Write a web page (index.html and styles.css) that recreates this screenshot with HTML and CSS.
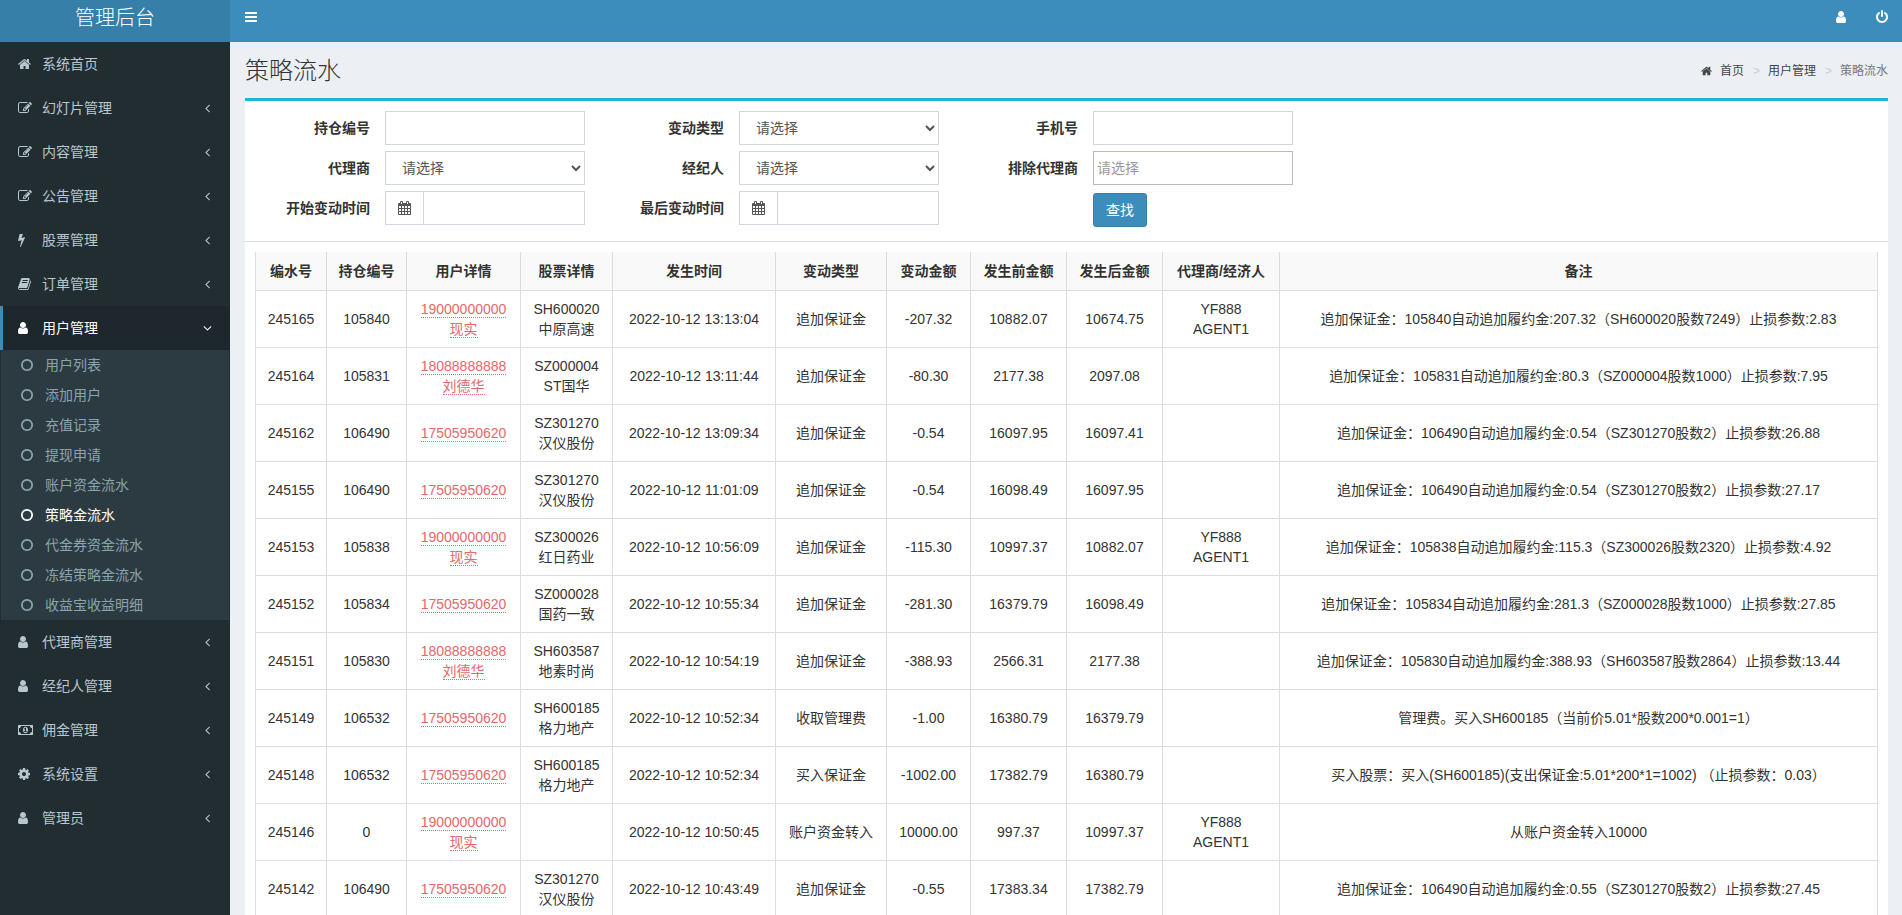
FILE: index.html
```html
<!DOCTYPE html>
<html lang="zh-CN">

<head>
    <meta charset="UTF-8">
    <meta name="viewport" content="width=device-width, initial-scale=1">
    <title>策略流水 - 管理后台</title>
    <link rel="stylesheet" href="styles.css">
</head>

<body>
    <!-- icon sprite -->
    <svg class="sprite" aria-hidden="true">
        <symbol id="i-home" viewBox="64 0 1664 1792"><path d="M1472 992v480q0 26-19 45t-45 19h-384v-384h-256v384h-384q-26 0-45-19t-19-45v-480q0-1 .5-3t.5-3l575-474 575 474q1 2 1 6zm223-69l-62 74q-8 9-21 11h-3q-13 0-21-7l-692-577-692 577q-12 8-24 7-13-2-21-11l-62-74q-8-10-7-23.5t11-21.5l719-599q32-26 76-26t76 26l244 204v-195q0-14 9-23t23-9h192q14 0 23 9t9 23v408l219 182q10 8 11 21.5t-7 23.5z"/></symbol>
        <symbol id="i-edit" viewBox="0 0 1792 1792"><path d="M888 1184l116-116-152-152-116 116v56h96v96h56zm440-720q-16-16-33 1l-350 350q-17 17-1 33t33-1l350-350q17-17 1-33zm80 594v190q0 119-84.5 203.5t-203.5 84.5h-832q-119 0-203.5-84.5t-84.5-203.5v-832q0-119 84.5-203.5t203.5-84.5h832q63 0 117 25 15 7 18 23 3 17-9 29l-49 49q-14 14-32 8-23-6-45-6h-832q-66 0-113 47t-47 113v832q0 66 47 113t113 47h832q66 0 113-47t47-113v-126q0-13 9-22l64-64q15-15 35-7t20 29zm-96-738l288 288-672 672h-288v-288zm444 132l-92 92-288-288 92-92q28-28 68-28t68 28l152 152q28 28 28 68t-28 68z"/></symbol>
        <symbol id="i-bolt" viewBox="448 0 896 1792"><path d="M1333 566q18 20 7 44l-540 1157q-13 25-42 25-4 0-14-2-17-5-25.5-19t-4.5-30l197-808-406 101q-4 1-12 1-18 0-31-11-18-15-13-39l201-825q4-14 16-23t28-9h328q19 0 32 12.5t13 29.5q0 8-5 18l-171 463 396-98q8-2 12-2 19 0 34 15z"/></symbol>
        <symbol id="i-book" viewBox="64 0 1664 1792"><path d="M1703 478q40 57 18 129l-275 906q-19 64-76.5 107.5t-122.5 43.5h-923q-77 0-148.5-53.5t-99.5-131.5q-24-67-2-127 0-4 3-27t4-37q1-8-3-21.5t-3-19.5q2-11 8-21t16.5-23.5 16.5-23.5q23-38 45-91.5t30-91.5q3-10 .5-30t-.5-28q3-11 17-28t17-23q21-36 42-92t25-90q1-9-2.5-32t.5-28q4-13 22-30.5t22-22.5q19-26 42.5-84.5t27.5-96.5q1-8-3-25.5t-2-26.5q2-8 9-18t18-23 17-21q8-12 16.5-30.5t15-35 16-36 19.5-32 26.5-23.5 36-11.5 47.5 5.5l-1 3q38-9 51-9h761q74 0 114 56t18 130l-274 906q-36 119-71.5 153.5t-128.5 34.5h-869q-27 0-38 15-11 16-1 43 24 70 144 70h923q29 0 56-15.5t35-41.5l300-987q7-22 5-57 38 15 59 43zm-1064 2q-4 13 2 22.5t20 9.5h608q13 0 25.5-9.5t16.5-22.5l21-64q4-13-2-22.5t-20-9.5h-608q-13 0-25.5 9.5t-16.5 22.5zm-83 256q-4 13 2 22.5t20 9.5h608q13 0 25.5-9.5t16.5-22.5l21-64q4-13-2-22.5t-20-9.5h-608q-13 0-25.5 9.5t-16.5 22.5z"/></symbol>
        <symbol id="i-user" viewBox="256 0 1280 1792"><path d="M1536 1399q0 109-62.5 187t-150.5 78h-854q-88 0-150.5-78t-62.5-187q0-85 8.5-160.5t31.5-152 58.5-131 94-89 134.5-34.5q131 128 313 128t313-128q76 0 134.5 34.5t94 89 58.5 131 31.5 152 8.5 160.5zm-256-887q0 159-112.5 271.5t-271.5 112.5-271.5-112.5-112.5-271.5 112.5-271.5 271.5-112.5 271.5 112.5 112.5 271.5z"/></symbol>
        <symbol id="i-money" viewBox="0 0 1920 1792"><path fill-rule="evenodd" d="M64 256h1792q64 0 64 64v1152q0 64-64 64H64q-64 0-64-64V320q0-64 64-64zM384 384q0 106-75 181t-181 75v512q106 0 181 75t75 181h1152q0-106 75-181t181-75V640q-106 0-181-75t-75-181zM960 480q150 0 235 125t85 291-85 291-235 125-235-125-85-291 85-291 235-125zM768 1152h384v-96h-128V608h-114L762 745l77 80q42-37 55-57h2v288H768z"/></symbol>
        <symbol id="i-cog" viewBox="128 0 1536 1792"><path d="M1152 896q0-106-75-181t-181-75-181 75-75 181 75 181 181 75 181-75 75-181zm512-109v222q0 12-8 23t-20 13l-185 28q-19 54-39 91 35 50 107 138 10 12 10 25t-9 23q-27 37-99 108t-94 71q-12 0-26-9l-138-108q-44 23-91 38-16 136-29 186-7 28-36 28h-222q-14 0-24.5-8.5t-11.5-21.5l-28-184q-49-16-90-37l-141 107q-10 9-25 9-14 0-25-11-126-114-165-168-7-10-7-23 0-12 8-23 15-21 51-66.5t54-70.5q-27-50-41-99l-183-27q-13-2-21-12.5t-8-23.5v-222q0-12 8-23t19-13l186-28q14-46 39-92-40-57-107-138-10-12-10-24 0-10 9-23 26-36 98.5-107.5t94.5-71.5q13 0 26 10l138 107q44-23 91-38 16-136 29-186 7-28 36-28h222q14 0 24.5 8.5t11.5 21.5l28 184q49 16 90 37l142-107q9-9 24-9 13 0 25 10 129 119 165 170 7 8 7 22 0 12-8 23-15 21-51 66.5t-54 70.5q26 50 41 98l183 28q13 2 21 12.5t8 23.5z"/></symbol>
        <symbol id="i-circle" viewBox="128 0 1536 1792"><path d="M896 352q-148 0-273 73t-198 198-73 273 73 273 198 198 273 73 273-73 198-198 73-273-73-273-198-198-273-73zm768 544q0 209-103 385.5t-279.5 279.5-385.5 103-385.5-103-279.5-279.5-103-385.5 103-385.5 279.5-279.5 385.5-103 385.5 103 279.5 279.5 103 385.5z"/></symbol>
        <symbol id="i-power" viewBox="128 0 1536 1792"><path d="M1664 896q0 156-61 298t-164 245-245 164-298 61-298-61-245-164-164-245-61-298q0-182 80.5-343t226.5-270q43-32 95.5-25t83.5 50q32 42 24.5 94.5t-49.5 84.5q-98 74-151.5 181t-53.5 228q0 104 40.5 198.5t109.5 163.5 163.5 109.5 198.5 40.5 198.5-40.5 163.5-109.5 109.5-163.5 40.5-198.5q0-121-53.5-228t-151.5-181q-42-32-49.5-84.5t24.5-94.5q31-43 84-50t95 25q146 109 226.5 270t80.5 343zm-640-768v640q0 52-38 90t-90 38-90-38-38-90v-640q0-52 38-90t90-38 90 38 38 90z"/></symbol>
        <symbol id="i-bars" viewBox="0 0 12 14"><path d="M0 2h12v2H0zM0 6h12v2H0zM0 10h12v2H0z"/></symbol>
        <symbol id="i-left" viewBox="576 0 640 1792"><path d="M1203 544q0 13-10 23l-393 393 393 393q10 10 10 23t-10 23l-50 50q-10 10-23 10t-23-10l-466-466q-10-10-10-23t10-23l466-466q10-10 23-10t23 10l50 50q10 10 10 23z"/></symbol>
        <symbol id="i-down" viewBox="320 0 1152 1792"><path d="M1395 736q0 13-10 23l-466 466q-10 10-23 10t-23-10l-466-466q-10-10-10-23t10-23l50-50q10-10 23-10t23 10l393 393 393-393q10-10 23-10t23 10l50 50q10 10 10 23z"/></symbol>
        <symbol id="i-calendar" viewBox="0 0 13 14"><path fill-rule="evenodd" d="M1 2h1V1q0-1 1-1h1q1 0 1 1v1h3V1q0-1 1-1h1q1 0 1 1v1h1q1 0 1 1v10q0 1-1 1H1q-1 0-1-1V3q0-1 1-1zM1 5v2h2V5zM4 5v2h2V5zM7 5v2h2V5zM10 5v2h2V5zM1 8v2h2V8zM4 8v2h2V8zM7 8v2h2V8zM10 8v2h2V8zM1 11v2h2v-2zM4 11v2h2v-2zM7 11v2h2v-2zM10 11v2h2v-2zM3 1v2h1V1zM9 1v2h1V1z"/></symbol>
    </svg>

    <div class="wrapper">
        <aside class="sidebar">
            <a href="#" class="logo">管理后台</a>
            <ul class="menu">
                <li><a href="#"><span class="ico"><svg class="w13"><use href="#i-home"/></svg></span>系统首页</a></li>
                <li><a href="#"><span class="ico"><svg class="w14"><use href="#i-edit"/></svg></span>幻灯片管理<svg class="arrow"><use href="#i-left"/></svg></a></li>
                <li><a href="#"><span class="ico"><svg class="w14"><use href="#i-edit"/></svg></span>内容管理<svg class="arrow"><use href="#i-left"/></svg></a></li>
                <li><a href="#"><span class="ico"><svg class="w14"><use href="#i-edit"/></svg></span>公告管理<svg class="arrow"><use href="#i-left"/></svg></a></li>
                <li><a href="#"><span class="ico"><svg class="w7"><use href="#i-bolt"/></svg></span>股票管理<svg class="arrow"><use href="#i-left"/></svg></a></li>
                <li><a href="#"><span class="ico"><svg class="w13"><use href="#i-book"/></svg></span>订单管理<svg class="arrow"><use href="#i-left"/></svg></a></li>
                <li class="active">
                    <a href="#"><span class="ico"><svg class="w10"><use href="#i-user"/></svg></span>用户管理<svg class="arrow open"><use href="#i-down"/></svg></a>
                    <ul class="submenu">
                        <li><a href="#"><svg class="w12"><use href="#i-circle"/></svg>用户列表</a></li>
                        <li><a href="#"><svg class="w12"><use href="#i-circle"/></svg>添加用户</a></li>
                        <li><a href="#"><svg class="w12"><use href="#i-circle"/></svg>充值记录</a></li>
                        <li><a href="#"><svg class="w12"><use href="#i-circle"/></svg>提现申请</a></li>
                        <li><a href="#"><svg class="w12"><use href="#i-circle"/></svg>账户资金流水</a></li>
                        <li><a href="#" class="current"><svg class="w12"><use href="#i-circle"/></svg>策略金流水</a></li>
                        <li><a href="#"><svg class="w12"><use href="#i-circle"/></svg>代金券资金流水</a></li>
                        <li><a href="#"><svg class="w12"><use href="#i-circle"/></svg>冻结策略金流水</a></li>
                        <li><a href="#"><svg class="w12"><use href="#i-circle"/></svg>收益宝收益明细</a></li>
                    </ul>
                </li>
                <li><a href="#"><span class="ico"><svg class="w10"><use href="#i-user"/></svg></span>代理商管理<svg class="arrow"><use href="#i-left"/></svg></a></li>
                <li><a href="#"><span class="ico"><svg class="w10"><use href="#i-user"/></svg></span>经纪人管理<svg class="arrow"><use href="#i-left"/></svg></a></li>
                <li><a href="#"><span class="ico"><svg class="w15"><use href="#i-money"/></svg></span>佣金管理<svg class="arrow"><use href="#i-left"/></svg></a></li>
                <li><a href="#"><span class="ico"><svg class="w12"><use href="#i-cog"/></svg></span>系统设置<svg class="arrow"><use href="#i-left"/></svg></a></li>
                <li><a href="#"><span class="ico"><svg class="w10"><use href="#i-user"/></svg></span>管理员<svg class="arrow"><use href="#i-left"/></svg></a></li>
            </ul>
        </aside>

        <div class="main">
            <header class="navbar">
                <button type="button" class="nav-btn" aria-label="切换菜单"><svg class="w12"><use href="#i-bars"/></svg></button>
                <div class="nav-right">
                    <a href="#" aria-label="用户"><svg class="w10"><use href="#i-user"/></svg></a>
                    <a href="#" aria-label="退出"><svg class="w12"><use href="#i-power"/></svg></a>
                </div>
            </header>

            <div class="content-header">
                <h1>策略流水</h1>
                <ol class="breadcrumb">
                    <li><a href="#"><svg class="home"><use href="#i-home"/></svg>首页</a></li>
                    <li><a href="#">用户管理</a></li>
                    <li class="here">策略流水</li>
                </ol>
            </div>

            <div class="box">
                <form class="search">
                    <div class="field">
                        <label for="position">持仓编号</label>
                        <input type="text" id="position" class="control">
                    </div>
                    <div class="field">
                        <label for="type">变动类型</label>
                        <select id="type" class="control"><option>请选择</option></select>
                    </div>
                    <div class="field">
                        <label for="mobile">手机号</label>
                        <input type="text" id="mobile" class="control">
                    </div>
                    <div class="field">
                        <label for="agent">代理商</label>
                        <select id="agent" class="control"><option>请选择</option></select>
                    </div>
                    <div class="field">
                        <label for="broker">经纪人</label>
                        <select id="broker" class="control"><option>请选择</option></select>
                    </div>
                    <div class="field">
                        <label for="exclude">排除代理商</label>
                        <input type="text" id="exclude" class="control multi" placeholder="请选择">
                    </div>
                    <div class="field">
                        <label for="start">开始变动时间</label>
                        <div class="control date">
                            <span class="addon"><svg class="w13"><use href="#i-calendar"/></svg></span>
                            <input type="text" id="start">
                        </div>
                    </div>
                    <div class="field">
                        <label for="end">最后变动时间</label>
                        <div class="control date">
                            <span class="addon"><svg class="w13"><use href="#i-calendar"/></svg></span>
                            <input type="text" id="end">
                        </div>
                    </div>
                    <div class="field submit">
                        <button type="submit" class="btn">查找</button>
                    </div>
                </form>

                <div class="box-body">
                    <table class="table">
                        <colgroup>
                            <col class="c-id">
                            <col class="c-pos">
                            <col class="c-user">
                            <col class="c-stock">
                            <col class="c-time">
                            <col class="c-type">
                            <col class="c-money">
                            <col class="c-before">
                            <col class="c-after">
                            <col class="c-agent">
                            <col>
                        </colgroup>
                        <thead>
                            <tr>
                                <th>编水号</th>
                                <th>持仓编号</th>
                                <th>用户详情</th>
                                <th>股票详情</th>
                                <th>发生时间</th>
                                <th>变动类型</th>
                                <th>变动金额</th>
                                <th>发生前金额</th>
                                <th>发生后金额</th>
                                <th>代理商/经济人</th>
                                <th>备注</th>
                            </tr>
                        </thead>
                        <tbody>
                            <tr>
                                <td>245165</td>
                                <td>105840</td>
                                <td><a href="#">19000000000<br>现实</a></td>
                                <td>SH600020<br>中原高速</td>
                                <td>2022-10-12 13:13:04</td>
                                <td>追加保证金</td>
                                <td>-207.32</td>
                                <td>10882.07</td>
                                <td>10674.75</td>
                                <td>YF888<br>AGENT1</td>
                                <td>追加保证金：105840自动追加履约金:207.32（SH600020股数7249）止损参数:2.83</td>
                            </tr>
                            <tr>
                                <td>245164</td>
                                <td>105831</td>
                                <td><a href="#">18088888888<br>刘德华</a></td>
                                <td>SZ000004<br>ST国华</td>
                                <td>2022-10-12 13:11:44</td>
                                <td>追加保证金</td>
                                <td>-80.30</td>
                                <td>2177.38</td>
                                <td>2097.08</td>
                                <td></td>
                                <td>追加保证金：105831自动追加履约金:80.3（SZ000004股数1000）止损参数:7.95</td>
                            </tr>
                            <tr>
                                <td>245162</td>
                                <td>106490</td>
                                <td><a href="#">17505950620</a></td>
                                <td>SZ301270<br>汉仪股份</td>
                                <td>2022-10-12 13:09:34</td>
                                <td>追加保证金</td>
                                <td>-0.54</td>
                                <td>16097.95</td>
                                <td>16097.41</td>
                                <td></td>
                                <td>追加保证金：106490自动追加履约金:0.54（SZ301270股数2）止损参数:26.88</td>
                            </tr>
                            <tr>
                                <td>245155</td>
                                <td>106490</td>
                                <td><a href="#">17505950620</a></td>
                                <td>SZ301270<br>汉仪股份</td>
                                <td>2022-10-12 11:01:09</td>
                                <td>追加保证金</td>
                                <td>-0.54</td>
                                <td>16098.49</td>
                                <td>16097.95</td>
                                <td></td>
                                <td>追加保证金：106490自动追加履约金:0.54（SZ301270股数2）止损参数:27.17</td>
                            </tr>
                            <tr>
                                <td>245153</td>
                                <td>105838</td>
                                <td><a href="#">19000000000<br>现实</a></td>
                                <td>SZ300026<br>红日药业</td>
                                <td>2022-10-12 10:56:09</td>
                                <td>追加保证金</td>
                                <td>-115.30</td>
                                <td>10997.37</td>
                                <td>10882.07</td>
                                <td>YF888<br>AGENT1</td>
                                <td>追加保证金：105838自动追加履约金:115.3（SZ300026股数2320）止损参数:4.92</td>
                            </tr>
                            <tr>
                                <td>245152</td>
                                <td>105834</td>
                                <td><a href="#">17505950620</a></td>
                                <td>SZ000028<br>国药一致</td>
                                <td>2022-10-12 10:55:34</td>
                                <td>追加保证金</td>
                                <td>-281.30</td>
                                <td>16379.79</td>
                                <td>16098.49</td>
                                <td></td>
                                <td>追加保证金：105834自动追加履约金:281.3（SZ000028股数1000）止损参数:27.85</td>
                            </tr>
                            <tr>
                                <td>245151</td>
                                <td>105830</td>
                                <td><a href="#">18088888888<br>刘德华</a></td>
                                <td>SH603587<br>地素时尚</td>
                                <td>2022-10-12 10:54:19</td>
                                <td>追加保证金</td>
                                <td>-388.93</td>
                                <td>2566.31</td>
                                <td>2177.38</td>
                                <td></td>
                                <td>追加保证金：105830自动追加履约金:388.93（SH603587股数2864）止损参数:13.44</td>
                            </tr>
                            <tr>
                                <td>245149</td>
                                <td>106532</td>
                                <td><a href="#">17505950620</a></td>
                                <td>SH600185<br>格力地产</td>
                                <td>2022-10-12 10:52:34</td>
                                <td>收取管理费</td>
                                <td>-1.00</td>
                                <td>16380.79</td>
                                <td>16379.79</td>
                                <td></td>
                                <td>管理费。买入SH600185（当前价5.01*股数200*0.001=1）</td>
                            </tr>
                            <tr>
                                <td>245148</td>
                                <td>106532</td>
                                <td><a href="#">17505950620</a></td>
                                <td>SH600185<br>格力地产</td>
                                <td>2022-10-12 10:52:34</td>
                                <td>买入保证金</td>
                                <td>-1002.00</td>
                                <td>17382.79</td>
                                <td>16380.79</td>
                                <td></td>
                                <td>买入股票：买入(SH600185)(支出保证金:5.01*200*1=1002) （止损参数：0.03）</td>
                            </tr>
                            <tr>
                                <td>245146</td>
                                <td>0</td>
                                <td><a href="#">19000000000<br>现实</a></td>
                                <td></td>
                                <td>2022-10-12 10:50:45</td>
                                <td>账户资金转入</td>
                                <td>10000.00</td>
                                <td>997.37</td>
                                <td>10997.37</td>
                                <td>YF888<br>AGENT1</td>
                                <td>从账户资金转入10000</td>
                            </tr>
                            <tr>
                                <td>245142</td>
                                <td>106490</td>
                                <td><a href="#">17505950620</a></td>
                                <td>SZ301270<br>汉仪股份</td>
                                <td>2022-10-12 10:43:49</td>
                                <td>追加保证金</td>
                                <td>-0.55</td>
                                <td>17383.34</td>
                                <td>17382.79</td>
                                <td></td>
                                <td>追加保证金：106490自动追加履约金:0.55（SZ301270股数2）止损参数:27.45</td>
                            </tr>
                        </tbody>
                    </table>
                </div>
            </div>
        </div>
    </div>
</body>

</html>
```
FILE: styles.css
```css
* {
    box-sizing: border-box;
}

body {
    margin: 0;
    font-family: "Liberation Sans", "Noto Sans CJK SC", sans-serif;
    font-size: 14px;
    line-height: 20px;
    color: #333;
    background: #ecf0f5;
}

a {
    color: inherit;
    text-decoration: none;
}

ul,
ol {
    list-style: none;
    margin: 0;
    padding: 0;
}

input,
select,
button {
    font: inherit;
    color: inherit;
}

svg {
    display: block;
    height: 14px;
    fill: currentColor;
}

.sprite {
    display: none;
}

/* icon widths */
.w7 { width: 7px; }
.w10 { width: 10px; }
.w12 { width: 12px; }
.w13 { width: 13px; }
.w14 { width: 14px; }
.w15 { width: 15px; }

.wrapper {
    display: flex;
    height: 100vh;
    overflow: hidden;
}

/* sidebar */
.sidebar {
    flex: none;
    width: 230px;
    background: #222d32;
    color: #b8c7ce;
}

.logo {
    display: block;
    height: 42px;
    line-height: 36px;
    font-size: 20px;
    font-weight: 300;
    text-align: center;
    color: #fff;
    background: #367fa9;
}

.menu > li > a {
    display: flex;
    align-items: center;
    height: 44px;
    padding: 0 20px 0 15px;
    border-left: 3px solid transparent;
}

.menu > .active > a {
    color: #fff;
    background: #1e282c;
    border-left-color: #3c8dbc;
}

.ico {
    width: 24px;
}

.arrow {
    width: 5px;
    margin-left: auto;
}

.arrow.open {
    width: 9px;
    margin-right: -2px;
}

.submenu {
    margin: 0 1px;
    background: #2c3b41;
    color: #8aa4af;
}

.submenu a {
    display: flex;
    align-items: center;
    gap: 12px;
    height: 30px;
    padding-left: 20px;
}

.submenu .current {
    color: #fff;
}

/* top bar */
.main {
    flex: 1;
    min-width: 0;
}

.navbar {
    display: flex;
    justify-content: space-between;
    height: 42px;
    padding: 10px 14px 0 15px;
    color: #fff;
    background: #3c8dbc;
}

.nav-btn {
    height: 14px;
    padding: 0;
    border: 0;
    background: none;
}

.nav-right {
    display: flex;
    gap: 30px;
}

.content-header {
    display: flex;
    justify-content: space-between;
    align-items: center;
    height: 56px;
    padding: 2px 14px 0 15px;
}

h1 {
    margin: 0;
    font-size: 24px;
    font-weight: 300;
}

.breadcrumb {
    display: flex;
    font-size: 12px;
}

.breadcrumb a {
    display: flex;
    align-items: center;
    color: #444;
}

.breadcrumb li {
    display: flex;
}

.breadcrumb li + li::before {
    content: ">";
    padding: 0 8px 0 9px;
    color: #ccc;
}

.breadcrumb .home {
    width: 11px;
    height: 12px;
    margin-right: 8px;
}

.breadcrumb .here {
    color: #777;
}

/* box */
.box {
    margin: 0 14px 0 15px;
    border-top: 3px solid #1fb5d8;
    background: #fff;
}

.search {
    display: grid;
    grid-template-columns: repeat(3, 340px);
    gap: 6px 14px;
    padding: 10px 0 14px;
    border-bottom: 1px solid #ddd;
}

.field {
    display: flex;
    align-items: flex-start;
    gap: 15px;
}

.field label {
    width: 125px;
    line-height: 34px;
    text-align: right;
    font-weight: 700;
}

.control {
    width: 200px;
    height: 34px;
    padding: 6px 12px;
    border: 1px solid #d2d6de;
    border-radius: 0;
    background: #fff;
    color: #555;
}

.control.multi {
    padding: 6px 3px;
    border-color: #bbb;
}

.control::placeholder {
    color: #999;
}

.date {
    display: flex;
    padding: 0;
}

.addon {
    display: flex;
    align-items: center;
    justify-content: center;
    width: 38px;
    border-right: 1px solid #d2d6de;
}

.date input {
    flex: 1;
    min-width: 0;
    border: 0;
    padding: 0 12px;
}

.submit {
    padding: 2px 0 0 140px;
}

.btn {
    height: 34px;
    padding: 0 12px;
    border: 1px solid #367fa9;
    border-radius: 3px;
    background: #3c8dbc;
    color: #fff;
}

.box-body {
    padding: 10px;
}

/* table */
.table {
    width: 100%;
    table-layout: fixed;
    border-collapse: collapse;
    text-align: center;
}

.table th,
.table td {
    padding: 8px 4px;
    border: 1px solid #ddd;
}

.table th {
    height: 38px;
    border-top: 0;
    background: #f9f9f9;
}

.table td {
    height: 57px;
}

.table a {
    color: #e4696c;
    border-bottom: 1px dotted #e4696c;
}

.c-id { width: 71px; }
.c-pos { width: 80px; }
.c-user { width: 114px; }
.c-stock { width: 92px; }
.c-time { width: 163px; }
.c-type { width: 111px; }
.c-money { width: 84px; }
.c-before { width: 96px; }
.c-after { width: 96px; }
.c-agent { width: 117px; }
```
